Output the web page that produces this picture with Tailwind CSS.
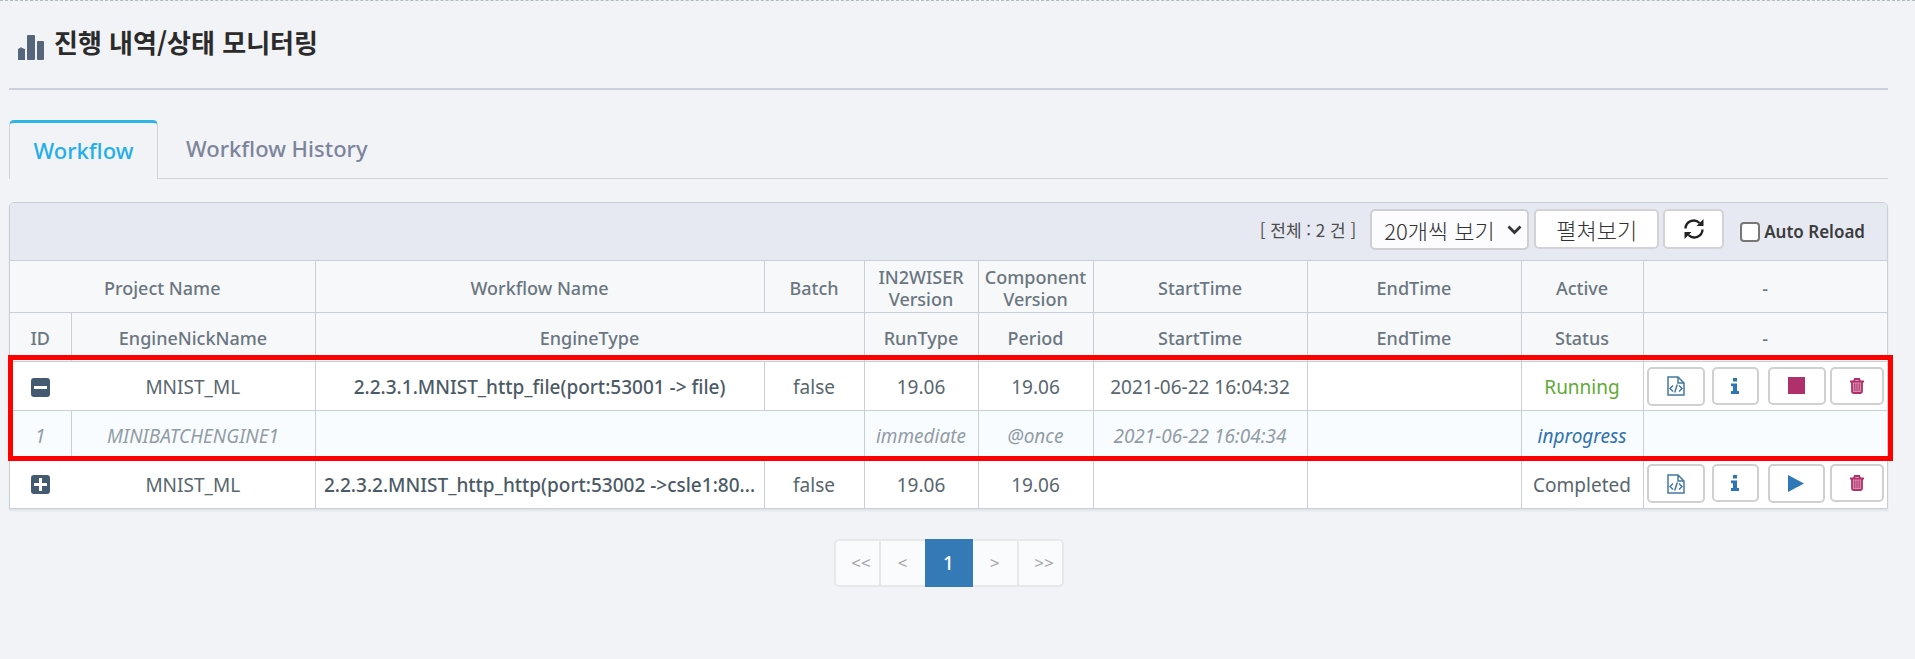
<!DOCTYPE html>
<html lang="ko">
<head>
<meta charset="utf-8">
<title>진행 내역/상태 모니터링</title>
<script src="https://cdn.jsdelivr.net/npm/@tailwindcss/browser@4"></script>
</head>
<body class="min-h-screen bg-[#f1f3f6] font-['Noto_Sans','Noto_Sans_CJK_KR',sans-serif] text-[19px] leading-[22px] text-[#58666e]">
<svg class="hidden">
  <symbol id="file" viewBox="0 0 18 20"><g fill="none" stroke="#44789f" stroke-width="1.500"><path d="M1 1h10l6 6v12H1zM11 1v6h6"/><path d="M6 9.500l-3 3 3 3M12 9.500l3 3-3 3M10.300 8.500l-2.600 8"/></g></symbol>
  <symbol id="info" viewBox="0 0 8 16"><path fill="#2d76b3" d="M2 0h4v3.500H2zM0 5.500h6V13h2v3H0v-3h2V8.300H0z"/></symbol>
  <symbol id="trash" viewBox="0 0 14 16"><path fill="#d68bad" d="M2 4h10v11H2z"/><g fill="none" stroke="#b0306b"><path stroke-width="1.800" d="M0 3.500h14M4 3l.8-2h4.400L10 3M2 4v9.500q0 1.500 1.500 1.500h7q1.500 0 1.500-1.500V4"/><path stroke-width="1" d="M4.800 5.500v7.500M7 5.500v7.500M9.200 5.500v7.500"/></g></symbol>
</svg>
<div class="border-t border-dashed border-[#b4b8bf]"></div>
<main class="pr-[27px] pl-[9px]">
  <header class="flex h-[89px] items-start gap-[10px] border-b-2 border-[#cdd1db] pt-[22px] pl-[9px]">
    <svg class="mt-3 h-[25px] w-[26px]" viewBox="0 0 26 25" fill="#56657a"><path d="M0 14l2-1 1-1 1 1 3 1v11H0z"/><rect x="9" width="8" height="25" rx="1"/><rect x="19" y="6" width="7" height="19" rx="1"/></svg>
    <h1 class="font-['Noto_Sans_CJK_KR',sans-serif] text-[26px] leading-[38px] font-bold text-[#2b2b2b]">진행 내역/상태 모니터링</h1>
  </header>

  <nav class="mt-[30px] flex h-[59px] border-b border-[#d0d5da] text-[22px] font-medium">
    <a href="#workflow" class="-mb-px flex w-[149px] items-center justify-center rounded-t-[5px] border-x border-t-3 border-x-[#d0d4da] border-t-[#2eb5e2] bg-[#f1f3f6] pb-[2px] text-[#22aeec]">Workflow</a>
    <a href="#history" class="flex items-center px-7 pb-[2px] text-[#7d849b]">Workflow History</a>
  </nav>

  <section class="relative mt-[23px] rounded-t-[5px] border border-[#c8cfd6] shadow-[0_2px_2px_#dfe3e7]">
    <div class="flex h-[57px] items-start justify-end rounded-t-[4px] bg-[#e6e9f2] pt-[6px] pr-[22px] font-['Noto_Sans_CJK_KR',sans-serif]">
      <span class="mt-[10px] mr-[14px] text-[17px] text-[#4c4c4c]">[ 전체 : 2 건 ]</span>
      <div class="relative mr-[5px]">
        <select aria-label="페이지당 개수" class="h-[41px] w-[159px] appearance-none rounded-[5px] border-2 border-[#cfcfd3] bg-[#fcfcfe] pl-[12px] text-[22px] font-light text-[#333]"><option>20개씩 보기</option></select>
        <svg class="pointer-events-none absolute top-4 right-[7px] h-[10px] w-[15px]" viewBox="0 0 15 10" fill="none" stroke="#333" stroke-width="2.800"><path d="M1.500 1.500l6 6 6-6"/></svg>
      </div>
      <button class="mr-1 h-10 w-[125px] rounded-[5px] border-2 border-[#d3d3d6] bg-white text-[22px] font-light text-[#333]">펼쳐보기</button>
      <button aria-label="새로고침" class="mr-4 flex h-10 w-[61px] items-center justify-center rounded-[5px] border-2 border-[#d3d3d6] bg-white"><svg class="h-[22px] w-[22px]" viewBox="0 0 22 22" fill="none" stroke="#222" stroke-width="2.400"><path d="M2.500 10.500a8.200 8.200 0 0 1 14-5.500M19.500 11.500a8.200 8.200 0 0 1-14 5.500"/><path fill="#222" stroke="none" d="M20.500 1v7h-7zM1.500 21v-7h7z"/></svg></button>
      <label class="mt-2 flex items-center gap-1 font-['Noto_Sans',sans-serif] text-[17px] font-semibold text-[#3c3c3c]"><input type="checkbox" class="mt-1 h-5 w-5 appearance-none rounded-[4px] border-2 border-[#777] bg-white"><span class="mt-1">Auto Reload</span></label>
    </div>

    <table class="w-full table-fixed border-collapse bg-white text-center [&_td]:border-x [&_td]:border-t [&_td]:border-[#c8cfd6] [&_td]:px-0 [&_td]:pt-[2px] [&_td]:pb-0 [&_td:first-child]:border-l-0 [&_td:last-child]:border-r-0 [&_td:last-child]:pt-0 [&_th]:border-x [&_th]:border-t [&_th]:border-[#c8cfd6] [&_th]:px-0 [&_th]:pt-[2px] [&_th]:pb-0 [&_th]:font-medium [&_th:first-child]:border-l-0 [&_th:last-child]:border-r-0">
      <colgroup><col class="w-[61px]"><col class="w-[244px]"><col><col class="w-[100px]"><col class="w-[114px]"><col class="w-[115px]"><col class="w-[214px]"><col class="w-[214px]"><col class="w-[122px]"><col class="w-[244px]"></colgroup>
      <thead class="bg-[#f6f8f9] text-[18px] text-[#6b7680]">
        <tr class="h-[52px]"><th colspan="2">Project Name</th><th>Workflow Name</th><th>Batch</th><th>IN2WISER<br>Version</th><th>Component<br>Version</th><th>StartTime</th><th>EndTime</th><th>Active</th><th>-</th></tr>
        <tr class="h-[49px]"><th>ID</th><th>EngineNickName</th><th colspan="2">EngineType</th><th>RunType</th><th>Period</th><th>StartTime</th><th>EndTime</th><th>Status</th><th>-</th></tr>
      </thead>
      <tbody>
        <tr class="h-[49px]">
          <td class="border-r-0!"><button aria-label="접기" class="ml-[21px] flex h-[19px] w-[19px] items-center justify-center rounded-[3px] bg-[#435a70]"><svg class="h-[13px] w-[13px]" viewBox="0 0 13 13"><path d="M0 6.500h13" stroke="#fff" stroke-width="3"/></svg></button></td>
          <td class="border-l-0!">MNIST_ML</td><td class="truncate font-medium text-[#4c5a66]">2.2.3.1.MNIST_http_file(port:53001 -&gt; file)</td><td>false</td><td>19.06</td><td>19.06</td><td>2021-06-22 16:04:32</td><td></td><td class="text-[#5faa35]">Running</td>
          <td><div class="flex items-start pl-[3px]">
            <button aria-label="소스" class="mr-[7px] flex h-[39px] w-[58px] items-center justify-center rounded-[5px] border-2 border-[#d0d0d0] bg-white"><svg class="h-5 w-[18px]"><use href="#file"/></svg></button>
            <button aria-label="정보" class="mr-[9px] flex h-[38px] w-[47px] items-center justify-center rounded-[5px] border-2 border-[#d0d0d0] bg-white"><svg class="h-4 w-2"><use href="#info"/></svg></button>
            <button aria-label="정지" class="mr-1 flex h-[38px] w-[58px] items-center justify-center rounded-[5px] border-2 border-[#d0d0d0] bg-white"><span class="h-[17px] w-[17px] bg-[#b0306b]"></span></button>
            <button aria-label="삭제" class="flex h-[38px] w-[54px] items-center justify-center rounded-[5px] border-2 border-[#d0d0d0] bg-white"><svg class="h-4 w-[14px]"><use href="#trash"/></svg></button>
          </div></td>
        </tr>
        <tr class="h-[49px] bg-[#f8fcff] text-[#929ca5] italic"><td>1</td><td>MINIBATCHENGINE1</td><td colspan="2"></td><td>immediate</td><td>@once</td><td>2021-06-22 16:04:34</td><td></td><td class="text-[#2f72ad]">inprogress</td><td></td></tr>
        <tr class="h-[48px]">
          <td class="border-r-0!"><button aria-label="펼치기" class="ml-[21px] flex h-[19px] w-[19px] items-center justify-center rounded-[3px] bg-[#435a70]"><svg class="h-[13px] w-[13px]" viewBox="0 0 13 13"><path d="M0 6.500h13M6.500 0v13" stroke="#fff" stroke-width="3"/></svg></button></td>
          <td class="border-l-0!">MNIST_ML</td><td class="truncate font-medium text-[#4c5a66]">2.2.3.2.MNIST_http_http(port:53002 -&gt;csle1:80...</td><td>false</td><td>19.06</td><td>19.06</td><td></td><td></td><td>Completed</td>
          <td><div class="flex items-start pl-[3px]">
            <button aria-label="소스" class="mr-[7px] flex h-[39px] w-[58px] items-center justify-center rounded-[5px] border-2 border-[#d0d0d0] bg-white"><svg class="h-5 w-[18px]"><use href="#file"/></svg></button>
            <button aria-label="정보" class="mr-[9px] flex h-[38px] w-[47px] items-center justify-center rounded-[5px] border-2 border-[#d0d0d0] bg-white"><svg class="h-4 w-2"><use href="#info"/></svg></button>
            <button aria-label="실행" class="mr-[5px] flex h-[39px] w-[57px] items-center justify-center rounded-[5px] border-2 border-[#d0d0d0] bg-white"><svg class="h-[17px] w-4" viewBox="0 0 16 17"><path d="M0 0l16 8.500L0 17z" fill="#2f78b8"/></svg></button>
            <button aria-label="삭제" class="flex h-[38px] w-[54px] items-center justify-center rounded-[5px] border-2 border-[#d0d0d0] bg-white"><svg class="h-4 w-[14px]"><use href="#trash"/></svg></button>
          </div></td>
        </tr>
      </tbody>
    </table>
    <div class="pointer-events-none absolute top-[152px] -right-[6px] -left-[2px] h-[106px] border-5 border-[#ff0000]"></div>
  </section>

  <nav aria-label="페이지" class="mt-[30px] flex justify-center text-[17px] text-[#a2a5a9]">
    <a href="#first" class="flex h-12 w-[47px] items-center justify-center rounded-l-[5px] border-2 border-[#e6e8ea] bg-[#fafbfc] pl-2">&lt;&lt;</a>
    <a href="#prev" class="flex h-12 w-[44px] items-center justify-center border-y-2 border-[#e6e8ea] bg-[#fafbfc]">&lt;</a>
    <a href="#1" aria-current="page" class="flex h-12 w-12 items-center justify-center bg-[#337ab7] text-[19px] font-medium text-white">1</a>
    <a href="#next" class="flex h-12 w-[44px] items-center justify-center border-y-2 border-[#e6e8ea] bg-[#fafbfc]">&gt;</a>
    <a href="#last" class="flex h-12 w-[47px] items-center justify-center rounded-r-[5px] border-2 border-[#e6e8ea] bg-[#fafbfc] pl-2">&gt;&gt;</a>
  </nav>
</main>
</body>
</html>
